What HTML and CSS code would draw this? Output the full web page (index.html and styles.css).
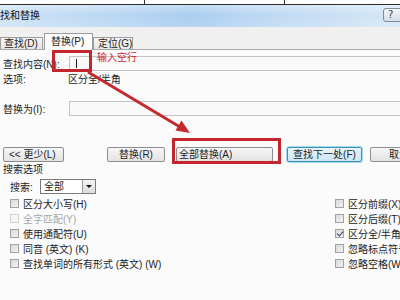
FILE: index.html
```html
<!DOCTYPE html>
<html lang="zh-CN">
<head>
<meta charset="utf-8">
<link rel="stylesheet" href="styles.css">
</head>
<body>
<div class="page">
  <div class="top-strip"><span></span><span></span><span></span></div>
  <div class="titlebar">
    <span class="title">找和替换</span>
    <span class="help">?</span>
  </div>
  <div class="tabs">
    <div class="tab t1">查找(D)</div>
    <div class="tab t2 active">替换(P)</div>
    <div class="tab t3">定位(G)</div>
  </div>
  <div class="panel">
    <div class="field-row r1">
      <span class="label">查找内容(N):</span>
      <div class="input"><span class="caret"></span></div>
    </div>
    <div class="opt-row">
      <span class="label">选项:</span>
      <span class="opt-val">区分全/半角</span>
    </div>
    <div class="field-row r2">
      <span class="label">替换为(I):</span>
      <div class="input"></div>
    </div>
    <div class="buttons">
      <div class="btn b1">&lt;&lt; 更少(L)</div>
      <div class="btn b2">替换(R)</div>
      <div class="btn b3">全部替换(A)</div>
      <div class="btn b4 default">查找下一处(F)</div>
      <div class="btn b5">取消</div>
    </div>
    <div class="section-title">搜索选项</div>
    <div class="search-row">
      <span class="search-label">搜索:</span>
      <div class="select"><span class="sel-text">全部</span><span class="sel-arrow"></span></div>
    </div>
    <div class="checks">
      <div class="col">
        <div class="chk"><span class="box"></span>区分大小写(H)</div>
        <div class="chk disabled"><span class="box"></span>全字匹配(Y)</div>
        <div class="chk"><span class="box"></span>使用通配符(U)</div>
        <div class="chk"><span class="box"></span>同音 (英文) (K)</div>
        <div class="chk"><span class="box"></span>查找单词的所有形式 (英文) (W)</div>
      </div>
      <div class="col">
        <div class="chk"><span class="box"></span>区分前缀(X)</div>
        <div class="chk"><span class="box"></span>区分后缀(T)</div>
        <div class="chk"><span class="box checked"></span>区分全/半角(M)</div>
        <div class="chk"><span class="box"></span>忽略标点符号(S)</div>
        <div class="chk"><span class="box"></span>忽略空格(W)</div>
      </div>
    </div>
  </div>

  <div class="anno-box"></div>
  <div class="anno-text">输入空行</div>
  <div class="anno-box2"></div>
  <svg class="anno-arrow" width="400" height="300" viewBox="0 0 400 300">
    <line x1="88" y1="72" x2="180" y2="127" stroke="#c42a2e" stroke-width="3"/>
    <polygon points="190,133 175.5,130.5 181.5,120.5" fill="#c42a2e"/>
  </svg>
</div>
</body>
</html>
```
FILE: styles.css
```css
* { box-sizing: border-box; }
html, body { margin: 0; padding: 0; }
body {
  width: 400px;
  height: 300px;
  overflow: hidden;
  font-family: "Liberation Sans", "Noto Sans CJK SC", sans-serif;
  font-size: 10px;
  color: #222;
  background: #fbfbfb;
}
.page {
  position: relative;
  width: 400px;
  height: 300px;
  overflow: hidden;
  display: flex;
  flex-direction: column;
}
.top-strip {
  height: 5px;
  background: #fdfdfd;
  border-bottom: 1px solid #2b2b2b;
  display: grid;
  grid-template-columns: 145px 140px 1fr;
}
.top-strip span { border-right: 1px solid #333; }
.top-strip span:last-child { border-right: none; }
.titlebar {
  height: 22px;
  display: flex;
  align-items: center;
  background:
    linear-gradient(to bottom, rgba(255,255,255,0.35), rgba(255,255,255,0) 45%, rgba(255,255,255,0.15)),
    linear-gradient(to right, #cde2f5 0%, #bcd8f3 25%, #a9cdef 48%, #b7d5f2 60%, #c4dcf3 75%, #d5e7f7 100%);
}
.title { padding-left: 0; line-height: 12px; color: #111; }
.help {
  margin-left: auto;
  margin-right: -4px;
  width: 21px;
  height: 14px;
  margin-top: -3px;
  border: 1px solid #7d8a99;
  border-radius: 3px;
  background: linear-gradient(#f4f6f8, #d6dde5);
  font-family: "DejaVu Sans", sans-serif;
  font-size: 10px;
  line-height: 12px;
  padding-left: 4px;
  color: #444;
}
.tabs {
  height: 23px;
  display: flex;
  align-items: flex-end;
  background: #f0f0f0;
  border-bottom: 1px solid #a9a9a9;
}
.tab {
  height: 12px;
  border: 1px solid #9c9c9c;
  border-bottom: none;
  background: linear-gradient(#f6f6f6, #e6e6e6);
  line-height: 11px;
  padding-left: 3px;
  white-space: nowrap;
}
.t1 { width: 43px; margin-left: 0; }
.t2 {
  width: 49px;
  margin-left: 1px;
  height: 17px;
  margin-bottom: -1px;
  background: #fbfbfb;
  padding-left: 6px;
  line-height: 15px;
}
.t3 { width: 40px; margin-left: 0; padding-left: 4px; }
.panel {
  flex: 1;
  padding-left: 3px;
  display: flex;
  flex-direction: column;
}
.field-row {
  height: 15px;
  display: flex;
  align-items: center;
}
.r1 { margin-top: 6px; }
.r2 { margin-top: 16px; }
.label { width: 66px; white-space: nowrap; }
.input {
  flex: 1;
  height: 15px;
  margin-right: -5px;
  border: 1px solid #c4c4c4;
  background: #f9f9f9;
  position: relative;
}
.caret {
  position: absolute;
  left: 6px;
  top: 2px;
  width: 1px;
  height: 9px;
  background: #222;
}
.opt-row {
  height: 14px;
  display: flex;
  align-items: center;
}
.opt-val { margin-left: -1px; }
.buttons {
  margin-top: 31px;
  height: 15px;
  display: flex;
}
.btn {
  height: 15px;
  border: 1px solid #8c8c8c;
  border-radius: 2px;
  background: linear-gradient(#f7f7f7, #e2e2e2);
  text-align: center;
  line-height: 13px;
  white-space: nowrap;
  flex: none;
}
.b1 { width: 61px; margin-left: 0; text-align: left; padding-left: 5px; }
.b2 { width: 58px; margin-left: 43px; }
.b3 { width: 97px; margin-left: 11px; text-align: left; padding-left: 2px; }
.b4 { width: 75px; margin-left: 14px; }
.default {
  border-color: #3c8fb5;
  background: linear-gradient(#e9f4fa, #cde6f3);
  box-shadow: 0 0 0 1px #a6daf0;
}
.b5 { width: 60px; margin-left: 8px; text-align: left; padding-left: 18px; }
.section-title {
  margin-top: 1px;
  height: 14px;
  line-height: 14px;
}
.search-row {
  margin-top: 2px;
  height: 15px;
  display: flex;
  align-items: center;
  padding-left: 7px;
}
.search-label { width: 30px; }
.select {
  width: 56px;
  height: 15px;
  border: 1px solid #7a7a7a;
  background: #fff;
  display: flex;
}
.sel-text { flex: 1; padding-left: 3px; line-height: 13px; }
.sel-arrow {
  width: 13px;
  border-left: 1px solid #9a9a9a;
  background: linear-gradient(#f4f4f4, #dcdcdc);
  position: relative;
}
.sel-arrow::after {
  content: "";
  position: absolute;
  left: 3px;
  top: 5px;
  border-left: 3px solid transparent;
  border-right: 3px solid transparent;
  border-top: 3px solid #111;
}
.checks {
  margin-top: 2px;
  padding-left: 7px;
  display: grid;
  grid-template-columns: 325px 1fr;
}
.chk {
  height: 15px;
  display: flex;
  align-items: center;
  white-space: nowrap;
}
.box {
  width: 9px;
  height: 9px;
  margin-right: 4px;
  border: 1px solid #a2a2a2;
  background: linear-gradient(135deg, #d9d9d9, #f2f2f2);
  position: relative;
  flex: none;
}
.disabled { color: #a8a8a8; }
.disabled .box { border-color: #d0d0d0; background: #f6f6f6; }
.box.checked::after {
  content: "";
  position: absolute;
  left: 2px;
  top: 0px;
  width: 3px;
  height: 5px;
  border-right: 1.5px solid #2a3f6a;
  border-bottom: 1.5px solid #2a3f6a;
  transform: rotate(40deg);
}
.anno-box {
  position: absolute;
  left: 52px;
  top: 50px;
  width: 40px;
  height: 22px;
  border: 3px solid #c4262e;
}
.anno-box2 {
  position: absolute;
  left: 172px;
  top: 138px;
  width: 109px;
  height: 26px;
  border: 3px solid #c4262e;
}
.anno-text {
  position: absolute;
  left: 97px;
  top: 51px;
  color: #d0222e;
  font-family: "Noto Sans CJK SC", sans-serif;
  font-size: 10px;
  line-height: 12px;
}
.anno-arrow {
  position: absolute;
  left: 0;
  top: 0;
  pointer-events: none;
}
```
